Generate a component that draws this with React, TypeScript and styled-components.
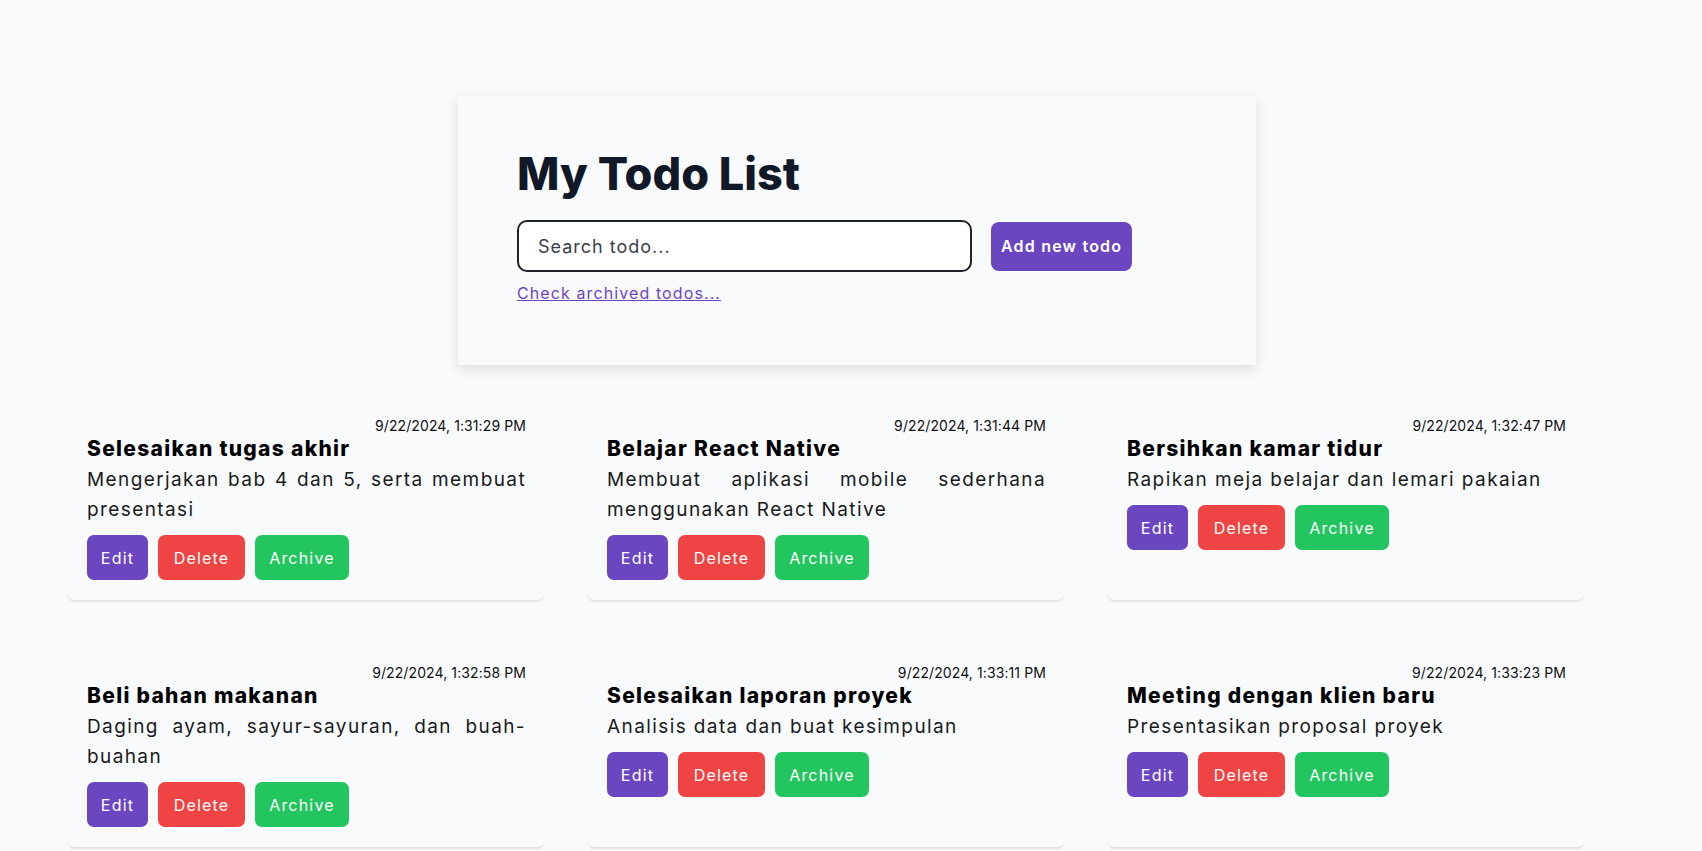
import React from "react";
import styled, { createGlobalStyle } from "styled-components";

const GlobalStyle = createGlobalStyle`
  html, body {
    margin: 0;
    padding: 0;
    background: #f8fafc;
    font-family: Inter, "Noto Sans", sans-serif;
    color: #111827;
  }
  * { box-sizing: border-box; }
`;

const Page = styled.main`
  padding: 96px 0 40px 0;
  display: flex;
  flex-direction: column;
`;

const HeaderCard = styled.section`
  margin-left: 458px;
  width: 798px;
  padding: 51px 59px 60px 59px;
  background: #f8fafc;
  box-shadow: 0 4px 12px rgba(0, 0, 0, 0.12);
  display: flex;
  flex-direction: column;
`;

const Title = styled.h1`
  margin: 0 0 19px 0;
  font-size: 45px;
  line-height: 54px;
  font-weight: 800;
  color: #111827;
`;

const SearchRow = styled.div`
  display: flex;
  align-items: center;
  gap: 19px;
`;

const SearchInput = styled.input`
  width: 455px;
  height: 52px;
  border: 2px solid #1f2328;
  border-radius: 10px;
  padding: 0 19px;
  font-family: inherit;
  font-size: 18px;
  letter-spacing: 1px;
  background: #ffffff;
  color: #111827;
  outline: none;
  &::placeholder {
    color: #3a3f47;
  }
`;

const PrimaryButton = styled.button`
  height: 49px;
  padding: 0 10px;
  border: none;
  border-radius: 8px;
  background: #6b46c1;
  color: #ffffff;
  font-family: inherit;
  font-size: 16px;
  font-weight: 600;
  letter-spacing: 1.2px;
`;

const ArchiveLink = styled.a`
  margin-top: 9px;
  font-size: 16px;
  line-height: 24px;
  letter-spacing: 1.1px;
  color: #6b46c1;
  text-decoration: underline;
  align-self: flex-start;
  cursor: pointer;
`;

const Grid = styled.section`
  margin-top: 31px;
  padding-left: 67px;
  display: grid;
  grid-template-columns: repeat(3, 478px);
  column-gap: 42px;
  row-gap: 43px;
`;

const TodoCard = styled.article`
  padding: 20px 19px 20px 20px;
  border-radius: 8px;
  background: #f8fafc;
  box-shadow: 0 3px 2px -1px rgba(0, 0, 0, 0.1);
  display: flex;
  flex-direction: column;
`;

const DateText = styled.div`
  text-align: right;
  font-size: 14px;
  line-height: 20px;
  letter-spacing: 0.1px;
  color: #111;
`;

const TodoTitle = styled.h2`
  margin: 0;
  font-size: 21px;
  line-height: 26px;
  font-weight: 800;
  letter-spacing: 1.3px;
  color: #000;
`;

const TodoBody = styled.p`
  margin: 3px 0 0 0;
  font-size: 19px;
  line-height: 30px;
  letter-spacing: 1.4px;
  text-align: justify;
  color: #1a1a1a;
`;

const Actions = styled.div`
  margin-top: 10px;
  display: flex;
  gap: 10px;
`;

const ActionButton = styled.button<{ $bg: string; $w: number }>`
  width: ${(p) => p.$w}px;
  height: 45px;
  border: none;
  border-radius: 7px;
  background: ${(p) => p.$bg};
  color: #ffffff;
  font-family: inherit;
  font-size: 16px;
  font-weight: 400;
  letter-spacing: 1.2px;
`;

type Todo = { title: string; body: string; date: string };

const todos: Todo[] = [
  {
    title: "Selesaikan tugas akhir",
    body: "Mengerjakan bab 4 dan 5, serta membuat presentasi",
    date: "9/22/2024, 1:31:29 PM",
  },
  {
    title: "Belajar React Native",
    body: "Membuat aplikasi mobile sederhana menggunakan React Native",
    date: "9/22/2024, 1:31:44 PM",
  },
  {
    title: "Bersihkan kamar tidur",
    body: "Rapikan meja belajar dan lemari pakaian",
    date: "9/22/2024, 1:32:47 PM",
  },
  {
    title: "Beli bahan makanan",
    body: "Daging ayam, sayur-sayuran, dan buah-buahan",
    date: "9/22/2024, 1:32:58 PM",
  },
  {
    title: "Selesaikan laporan proyek",
    body: "Analisis data dan buat kesimpulan",
    date: "9/22/2024, 1:33:11 PM",
  },
  {
    title: "Meeting dengan klien baru",
    body: "Presentasikan proposal proyek",
    date: "9/22/2024, 1:33:23 PM",
  },
];

export default function App() {
  return (
    <>
      <GlobalStyle />
      <Page>
        <HeaderCard>
          <Title>My Todo List</Title>
          <SearchRow>
            <SearchInput placeholder="Search todo..." />
            <PrimaryButton>Add new todo</PrimaryButton>
          </SearchRow>
          <ArchiveLink>Check archived todos...</ArchiveLink>
        </HeaderCard>
        <Grid>
          {todos.map((t) => (
            <TodoCard key={t.date}>
              <DateText>{t.date}</DateText>
              <TodoTitle>{t.title}</TodoTitle>
              <TodoBody>{t.body}</TodoBody>
              <Actions>
                <ActionButton $bg="#6b46c1" $w={61}>Edit</ActionButton>
                <ActionButton $bg="#ef4444" $w={87}>Delete</ActionButton>
                <ActionButton $bg="#22c55e" $w={94}>Archive</ActionButton>
              </Actions>
            </TodoCard>
          ))}
        </Grid>
      </Page>
    </>
  );
}
